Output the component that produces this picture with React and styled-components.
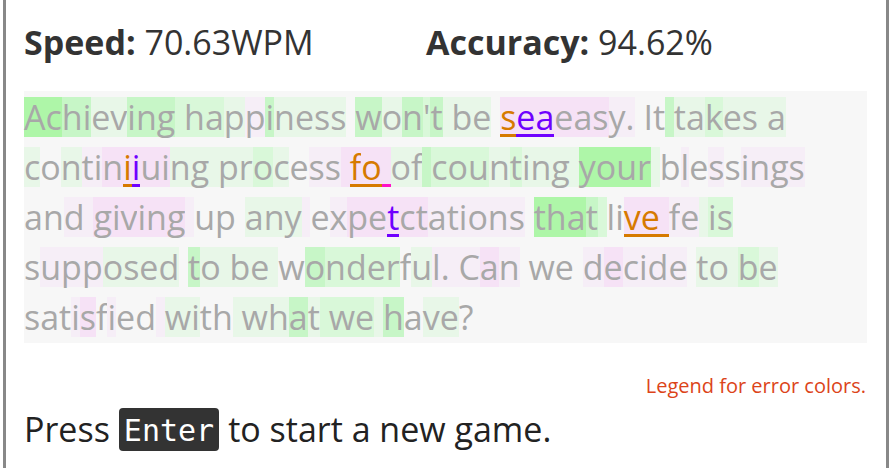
import React from "react";
import styled, { createGlobalStyle } from "styled-components";

const GlobalStyle = createGlobalStyle`
  html, body {
    margin: 0;
    padding: 0;
    background: #fff;
    overflow: hidden;
  }
  body {
    font-family: "Open Sans", "Noto Sans", sans-serif;
  }
`;

const LEVELS = {
  "3": "#aef6a8",
  "2": "#c7f6c7",
  "1": "#d9f8d9",
  "0": "#e8f7e8",
  n: "transparent",
  p: "#f6eef7",
  q: "#f6e2f6",
};

const ERRORS = {
  o: { color: "#d67a00", line: "#d67a00" },
  v: { color: "#7000ff", line: "#7000ff" },
  m: { color: "#a8a8a8", line: "#ff10c8" },
};

// each segment: [text, bg level per char, error per char]
const LINES = [
  [
    ["Achieving ", "3322002221"],
    ["happiness ", "110p20000n"],
    ["won't ", "202120"],
    ["be ", "00n"],
    ["sea", "qqq", "ovv"],
    ["easy. ", "qqqppn"],
    ["It ", "nn2"],
    ["takes a", "0010000"],
  ],
  [
    ["contin", "0n0ppq"],
    ["ii", "qq", "ov"],
    ["uing ", "qq000"],
    ["process ", "0010nppq"],
    ["fo ", "qqq", "oom"],
    ["of ", "002"],
    ["counting ", "111010000"],
    ["your ", "33330"],
    ["blessings", "npnpnpppp"],
  ],
  [
    ["and ", "nnpp"],
    ["giving ", "qqqqqqp"],
    ["up ", "nnn"],
    ["any ", "000p"],
    ["expe", "npqq"],
    ["t", "q", "v"],
    ["ctations ", "qqppppppn"],
    ["that ", "33321"],
    ["li", "nn"],
    ["ve ", "qqq", "ooo"],
    ["fe ", "pp0"],
    ["is", "11"],
  ],
  [
    ["supposed ", "nppp0000n"],
    ["to ", "200"],
    ["be ", "000"],
    ["wonderful. ", "n21111n0ppp"],
    ["Can ", "pqpn"],
    ["we ", "nnn"],
    ["decide ", "pqppppn"],
    ["to ", "000"],
    ["be", "10"],
  ],
  [
    ["satisfied ", "nnnpqnpnnp"],
    ["with ", "00nn0"],
    ["what ", "00201"],
    ["we ", "110"],
    ["have?", "2n00n"],
  ],
];

const Frame = styled.div`
  width: 886px;
  margin-left: 3px;
  min-height: 468px;
  border-left: 3px solid #888;
  border-right: 3px solid #888;
  padding: 0 19px 0 18px;
  box-sizing: border-box;
`;

const StatsRow = styled.div`
  display: grid;
  grid-template-columns: 402px auto;
  padding-top: 22px;
  height: 91px;
  box-sizing: border-box;
  font-size: 34px;
  line-height: 40px;
  color: #333;
`;

const Stat = styled.div`
  white-space: nowrap;
  b {
    font-weight: 700;
  }
`;

const TextBox = styled.div`
  background: #f7f7f7;
  padding: 6px 0;
`;

const Line = styled.div`
  display: flex;
  height: 40px;
  & + & {
    margin-top: 10px;
  }
`;

const Char = styled.span`
  display: inline-block;
  height: 40px;
  line-height: 40px;
  font-size: 34px;
  white-space: pre;
  color: ${(p) => (p.$err ? ERRORS[p.$err].color : "#a8a8a8")};
  background: ${(p) => LEVELS[p.$level] || "transparent"};
  box-shadow: ${(p) =>
    p.$err ? `inset 0 -3px 0 ${ERRORS[p.$err].line}` : "none"};
`;

const Legend = styled.div`
  text-align: right;
  padding-top: 30px;
  padding-right: 1px;
  font-size: 20px;
  line-height: 25px;
  color: #dc4419;
`;

const Prompt = styled.div`
  display: flex;
  align-items: center;
  gap: 9px;
  margin-top: 8px;
  font-size: 34px;
  color: #222;
`;

const Kbd = styled.kbd`
  display: inline-block;
  background: #333;
  color: #fff;
  border-radius: 4px;
  padding: 0 5px;
  height: 43px;
  line-height: 45px;
  font-family: "DejaVu Sans Mono", monospace;
  font-size: 30px;
`;

function TypedLine({ segments }) {
  const chars = [];
  segments.forEach(([text, levels, errs], si) => {
    text.split("").forEach((ch, ci) => {
      const err = errs && errs[ci] !== "." ? errs[ci] : null;
      chars.push(
        <Char key={`${si}-${ci}`} $level={levels[ci]} $err={err}>
          {ch}
        </Char>
      );
    });
  });
  return <Line>{chars}</Line>;
}

export default function App() {
  return (
    <>
      <GlobalStyle />
      <Frame>
        <StatsRow>
          <Stat>
            <b>Speed:</b> 70.63WPM
          </Stat>
          <Stat>
            <b>Accuracy:</b> 94.62%
          </Stat>
        </StatsRow>
        <TextBox>
          {LINES.map((segments, i) => (
            <TypedLine key={i} segments={segments} />
          ))}
        </TextBox>
        <Legend>Legend for error colors.</Legend>
        <Prompt>
          <span>Press</span>
          <Kbd>Enter</Kbd>
          <span>to start a new game.</span>
        </Prompt>
      </Frame>
    </>
  );
}
